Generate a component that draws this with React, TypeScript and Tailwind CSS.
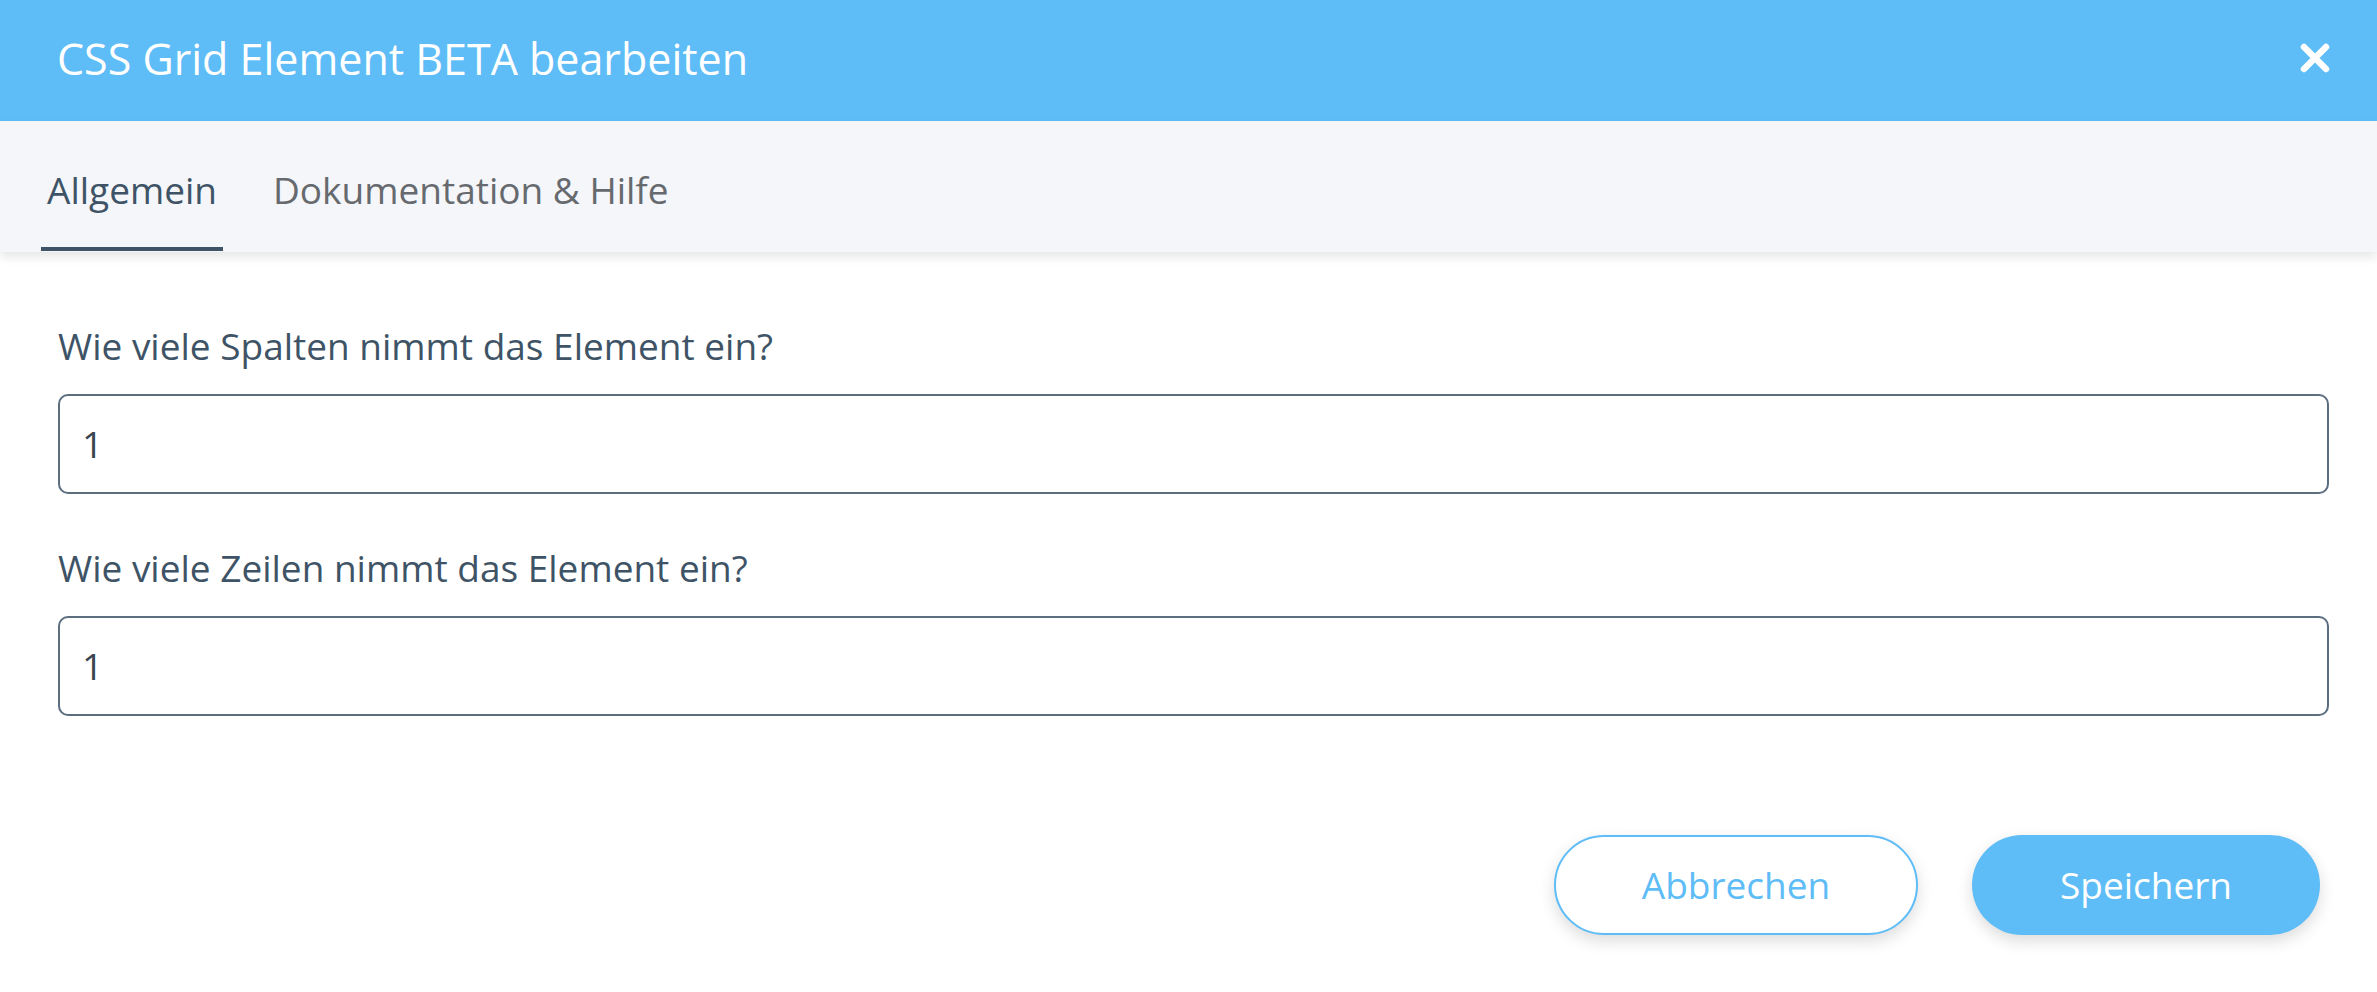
import React from "react";

function CloseIcon() {
  return (
    <svg width="30" height="30" viewBox="0 0 30 30" fill="none" aria-hidden="true">
      <path d="M4 4 L26 26 M26 4 L4 26" stroke="white" strokeWidth="6.5" strokeLinecap="round" />
    </svg>
  );
}

function Field({ label, value }: { label: string; value: string }) {
  return (
    <div className="flex flex-col">
      <label className="text-[37px] leading-[48px] text-[#3e5466]">{label}</label>
      <div className="mt-[24px] h-[100px] rounded-[10px] border-2 border-[#5a6e80] flex items-center pl-[22px] text-[37px] text-[#3b4550]">
        {value}
      </div>
    </div>
  );
}

export default function App() {
  return (
    <div
      className="w-[2377px] h-[992px] bg-white flex flex-col overflow-hidden"
      style={{ fontFamily: '"Open Sans", "Noto Sans", sans-serif' }}
    >
      {/* title bar */}
      <header className="h-[121px] shrink-0 bg-[#5ebcf6] flex items-center justify-between pl-[57px] pr-[47px]">
        <h1 className="text-[43px] leading-[56px] text-white font-normal -mt-[4px]">CSS Grid Element BETA bearbeiten</h1>
        <button className="w-[30px] h-[30px] flex items-center justify-center -mt-[6px]">
          <CloseIcon />
        </button>
      </header>

      {/* tab strip */}
      <nav className="relative z-10 h-[131px] shrink-0 bg-[#f5f6fa] flex items-start px-[41px] gap-[44px] shadow-[0_5px_10px_rgba(0,0,0,0.10)]">
        <div className="flex flex-col">
          <span className="pt-[45px] px-[6px] text-[37px] leading-[48px] text-[#3e5466]">Allgemein</span>
          <span className="mt-[33px] h-[4px] bg-[#3e5466]" />
        </div>
        <div className="flex flex-col">
          <span className="pt-[45px] px-[6px] text-[37px] leading-[48px] text-[#666a6e]">Dokumentation &amp; Hilfe</span>
        </div>
      </nav>

      {/* form body */}
      <main className="flex flex-col pl-[58px] pr-[48px] pt-[70px]">
        <Field label="Wie viele Spalten nimmt das Element ein?" value="1" />
        <div className="h-[50px]" />
        <Field label="Wie viele Zeilen nimmt das Element ein?" value="1" />

        <div className="mt-[119px] flex justify-end gap-[54px] pr-[9px]">
          <button className="w-[364px] h-[100px] rounded-full border-2 border-[#5ebcf6] bg-white text-[#5ebcf6] text-[37px] shadow-[0_6px_16px_rgba(0,0,0,0.14)]">
            Abbrechen
          </button>
          <button className="w-[348px] h-[100px] rounded-full bg-[#5ebcf6] text-white text-[37px] shadow-[0_6px_16px_rgba(0,0,0,0.14)]">
            Speichern
          </button>
        </div>
      </main>
    </div>
  );
}
